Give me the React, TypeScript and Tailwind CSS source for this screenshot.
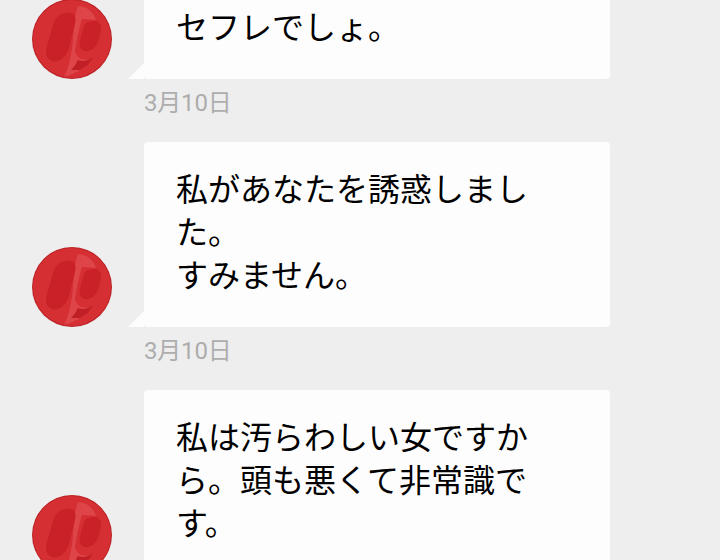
type Message = { lines: string[]; date?: string };

const messages: Message[] = [
  { lines: ['セフレでしょ。'], date: '3月10日' },
  { lines: ['私があなたを誘惑しました。', 'すみません。'], date: '3月10日' },
  { lines: ['私は汚らわしい女ですから。頭も悪くて非常識です。'] },
];

function Avatar() {
  return (
    <svg width="80" height="80" viewBox="0 0 80 80" className="shrink-0">
      <circle cx="40" cy="40" r="40" fill="#b92226" />
      <circle cx="40" cy="40" r="39" fill="#d52e33" />
      {/* light loop of the 9 */}
      <path d="M46 7 C54 7 61 12 64 21 L50 20 C47 30 44 44 43 52 C45 60 52 63 60 59 C54 68 44 75 32 78 C37 68 40 54 41 40 C42 26 43 15 46 7Z" fill="#dd4549" />
      {/* dark strokes */}
      <path d="M33 14 C41 12 45 17 43 25 L37 49 C34 59 26 64 20 62 C14 60 13 54 15 47 L21 26 C23 19 27 15 33 14Z" fill="#c92127" />
      <path d="M60 22 C67 21 70 26 69 32 L66 42 C64 49 58 53 53 52 C48 51 47 46 48 41 L51 30 C52 25 55 23 60 22Z" fill="#c92127" />
      <path d="M61 58 C58 64 54 68 48 71 L39 71 C42 68 44 65 46 61 C51 63 56 62 61 58Z" fill="#c02025" />
    </svg>
  );
}

function Row({ message }: { message: Message }) {
  return (
    <div>
      <div className="flex items-end pl-8">
        <Avatar />
        <div className="relative ml-8 w-[466px] rounded-[4px] bg-[#fdfdfd] pl-[32px] pr-[80px] pt-[27px] pb-[29px]">
          <div className="absolute bottom-0 left-[-16px] h-4 w-4 bg-[#fdfdfd] [clip-path:polygon(100%_0,100%_100%,0_100%)]" />
          {message.lines.map((line) => (
            <p key={line} className="text-[32px] leading-[43px] text-black break-all">
              {line}
            </p>
          ))}
        </div>
      </div>
      {message.date && (
        <div className="ml-36 mt-2 mb-[22px] h-[33px] text-[24px] leading-[33px] tracking-[-0.2px] text-[#adadad]">{message.date}</div>
      )}
    </div>
  );
}

export default function App() {
  return (
    <div className="h-[560px] w-[720px] overflow-hidden bg-[#eeeeee] font-['Roboto','Noto_Sans_CJK_JP',sans-serif]">
      <div className="-mt-[20px]">
        {messages.map((m, i) => (
          <Row key={i} message={m} />
        ))}
      </div>
    </div>
  );
}
